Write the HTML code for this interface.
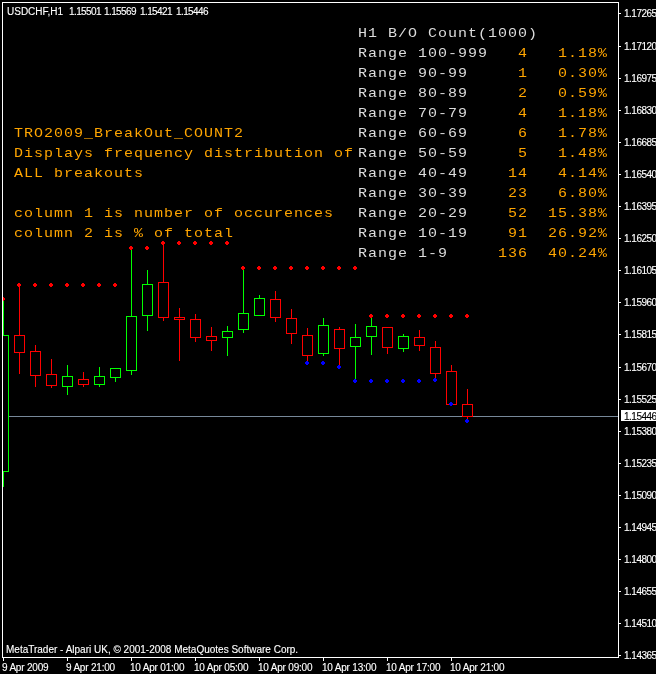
<!DOCTYPE html><html><head><meta charset="utf-8"><style>
html,body{margin:0;padding:0;background:#000;width:656px;height:674px;overflow:hidden;position:relative}
.pl{position:absolute;left:624px;letter-spacing:-0.5px;font:10px "Liberation Sans",sans-serif;color:#fff;line-height:14px;white-space:pre}
.cur{color:#000}
.tl{position:absolute;top:661px;letter-spacing:-0.2px;font:10px "Liberation Sans",sans-serif;color:#fff;line-height:14px;white-space:pre}
.hdr{position:absolute;left:7px;top:5px;letter-spacing:-0.6px;font:10px "Liberation Sans",sans-serif;color:#fff;line-height:14px;white-space:pre}
.ftr{position:absolute;left:6px;top:643px;font:10px "Liberation Sans",sans-serif;color:#fff;line-height:14px;white-space:pre}
.mono{position:absolute;font:15px "Liberation Mono",monospace;letter-spacing:1px;line-height:22px;white-space:pre;transform:scaleY(0.9091) translateZ(0);transform-origin:0 0}
div.pl,div.tl,div.hdr,div.ftr{will-change:transform;-webkit-text-stroke:0.12px currentColor}
.w{color:#dcdcdc}.o{color:#ffa500}
</style></head><body>
<svg width="656" height="674" shape-rendering="crispEdges" style="position:absolute;left:0;top:0"><rect x="3" y="416" width="615" height="1" fill="#778899"/><rect x="3" y="301" width="1" height="186" fill="#00ff00"/><rect x="-2" y="335" width="11" height="137" fill="#00ff00"/><rect x="-1" y="336" width="9" height="135" fill="#000000"/><rect x="19" y="287" width="1" height="87" fill="#ff0000"/><rect x="14" y="335" width="11" height="18" fill="#ff0000"/><rect x="15" y="336" width="9" height="16" fill="#000000"/><rect x="35" y="345" width="1" height="42" fill="#ff0000"/><rect x="30" y="351" width="11" height="25" fill="#ff0000"/><rect x="31" y="352" width="9" height="23" fill="#000000"/><rect x="51" y="359" width="1" height="29" fill="#ff0000"/><rect x="46" y="374" width="11" height="12" fill="#ff0000"/><rect x="47" y="375" width="9" height="10" fill="#000000"/><rect x="67" y="365" width="1" height="30" fill="#00ff00"/><rect x="62" y="376" width="11" height="11" fill="#00ff00"/><rect x="63" y="377" width="9" height="9" fill="#000000"/><rect x="83" y="372" width="1" height="15" fill="#ff0000"/><rect x="78" y="379" width="11" height="6" fill="#ff0000"/><rect x="79" y="380" width="9" height="4" fill="#000000"/><rect x="99" y="367" width="1" height="20" fill="#00ff00"/><rect x="94" y="376" width="11" height="9" fill="#00ff00"/><rect x="95" y="377" width="9" height="7" fill="#000000"/><rect x="115" y="368" width="1" height="14" fill="#00ff00"/><rect x="110" y="368" width="11" height="10" fill="#00ff00"/><rect x="111" y="369" width="9" height="8" fill="#000000"/><rect x="131" y="250" width="1" height="125" fill="#00ff00"/><rect x="126" y="316" width="11" height="55" fill="#00ff00"/><rect x="127" y="317" width="9" height="53" fill="#000000"/><rect x="147" y="270" width="1" height="61" fill="#00ff00"/><rect x="142" y="284" width="11" height="32" fill="#00ff00"/><rect x="143" y="285" width="9" height="30" fill="#000000"/><rect x="163" y="245" width="1" height="76" fill="#ff0000"/><rect x="158" y="282" width="11" height="36" fill="#ff0000"/><rect x="159" y="283" width="9" height="34" fill="#000000"/><rect x="179" y="308" width="1" height="53" fill="#ff0000"/><rect x="174" y="317" width="11" height="3" fill="#ff0000"/><rect x="175" y="318" width="9" height="1" fill="#000000"/><rect x="195" y="314" width="1" height="28" fill="#ff0000"/><rect x="190" y="319" width="11" height="19" fill="#ff0000"/><rect x="191" y="320" width="9" height="17" fill="#000000"/><rect x="211" y="327" width="1" height="24" fill="#ff0000"/><rect x="206" y="336" width="11" height="5" fill="#ff0000"/><rect x="207" y="337" width="9" height="3" fill="#000000"/><rect x="227" y="326" width="1" height="30" fill="#00ff00"/><rect x="222" y="331" width="11" height="7" fill="#00ff00"/><rect x="223" y="332" width="9" height="5" fill="#000000"/><rect x="243" y="270" width="1" height="63" fill="#00ff00"/><rect x="238" y="313" width="11" height="17" fill="#00ff00"/><rect x="239" y="314" width="9" height="15" fill="#000000"/><rect x="259" y="295" width="1" height="21" fill="#00ff00"/><rect x="254" y="298" width="11" height="18" fill="#00ff00"/><rect x="255" y="299" width="9" height="16" fill="#000000"/><rect x="275" y="291" width="1" height="31" fill="#ff0000"/><rect x="270" y="299" width="11" height="19" fill="#ff0000"/><rect x="271" y="300" width="9" height="17" fill="#000000"/><rect x="291" y="309" width="1" height="35" fill="#ff0000"/><rect x="286" y="318" width="11" height="16" fill="#ff0000"/><rect x="287" y="319" width="9" height="14" fill="#000000"/><rect x="307" y="328" width="1" height="35" fill="#ff0000"/><rect x="302" y="335" width="11" height="21" fill="#ff0000"/><rect x="303" y="336" width="9" height="19" fill="#000000"/><rect x="323" y="318" width="1" height="38" fill="#00ff00"/><rect x="318" y="325" width="11" height="29" fill="#00ff00"/><rect x="319" y="326" width="9" height="27" fill="#000000"/><rect x="339" y="327" width="1" height="40" fill="#ff0000"/><rect x="334" y="329" width="11" height="20" fill="#ff0000"/><rect x="335" y="330" width="9" height="18" fill="#000000"/><rect x="355" y="324" width="1" height="57" fill="#00ff00"/><rect x="350" y="337" width="11" height="10" fill="#00ff00"/><rect x="351" y="338" width="9" height="8" fill="#000000"/><rect x="371" y="318" width="1" height="37" fill="#00ff00"/><rect x="366" y="326" width="11" height="11" fill="#00ff00"/><rect x="367" y="327" width="9" height="9" fill="#000000"/><rect x="387" y="327" width="1" height="27" fill="#ff0000"/><rect x="382" y="327" width="11" height="21" fill="#ff0000"/><rect x="383" y="328" width="9" height="19" fill="#000000"/><rect x="403" y="334" width="1" height="18" fill="#00ff00"/><rect x="398" y="336" width="11" height="13" fill="#00ff00"/><rect x="399" y="337" width="9" height="11" fill="#000000"/><rect x="419" y="330" width="1" height="21" fill="#ff0000"/><rect x="414" y="337" width="11" height="9" fill="#ff0000"/><rect x="415" y="338" width="9" height="7" fill="#000000"/><rect x="435" y="341" width="1" height="39" fill="#ff0000"/><rect x="430" y="347" width="11" height="27" fill="#ff0000"/><rect x="431" y="348" width="9" height="25" fill="#000000"/><rect x="451" y="365" width="1" height="40" fill="#ff0000"/><rect x="446" y="371" width="11" height="34" fill="#ff0000"/><rect x="447" y="372" width="9" height="32" fill="#000000"/><rect x="467" y="389" width="1" height="32" fill="#ff0000"/><rect x="462" y="404" width="11" height="13" fill="#ff0000"/><rect x="463" y="405" width="9" height="11" fill="#000000"/><rect x="2" y="297" width="2" height="1" fill="#ff0000"/><rect x="1" y="298" width="4" height="2" fill="#ff0000"/><rect x="2" y="300" width="2" height="1" fill="#ff0000"/><rect x="18" y="283" width="2" height="1" fill="#ff0000"/><rect x="17" y="284" width="4" height="2" fill="#ff0000"/><rect x="18" y="286" width="2" height="1" fill="#ff0000"/><rect x="34" y="283" width="2" height="1" fill="#ff0000"/><rect x="33" y="284" width="4" height="2" fill="#ff0000"/><rect x="34" y="286" width="2" height="1" fill="#ff0000"/><rect x="50" y="283" width="2" height="1" fill="#ff0000"/><rect x="49" y="284" width="4" height="2" fill="#ff0000"/><rect x="50" y="286" width="2" height="1" fill="#ff0000"/><rect x="66" y="283" width="2" height="1" fill="#ff0000"/><rect x="65" y="284" width="4" height="2" fill="#ff0000"/><rect x="66" y="286" width="2" height="1" fill="#ff0000"/><rect x="82" y="283" width="2" height="1" fill="#ff0000"/><rect x="81" y="284" width="4" height="2" fill="#ff0000"/><rect x="82" y="286" width="2" height="1" fill="#ff0000"/><rect x="98" y="283" width="2" height="1" fill="#ff0000"/><rect x="97" y="284" width="4" height="2" fill="#ff0000"/><rect x="98" y="286" width="2" height="1" fill="#ff0000"/><rect x="114" y="283" width="2" height="1" fill="#ff0000"/><rect x="113" y="284" width="4" height="2" fill="#ff0000"/><rect x="114" y="286" width="2" height="1" fill="#ff0000"/><rect x="130" y="246" width="2" height="1" fill="#ff0000"/><rect x="129" y="247" width="4" height="2" fill="#ff0000"/><rect x="130" y="249" width="2" height="1" fill="#ff0000"/><rect x="146" y="246" width="2" height="1" fill="#ff0000"/><rect x="145" y="247" width="4" height="2" fill="#ff0000"/><rect x="146" y="249" width="2" height="1" fill="#ff0000"/><rect x="162" y="241" width="2" height="1" fill="#ff0000"/><rect x="161" y="242" width="4" height="2" fill="#ff0000"/><rect x="162" y="244" width="2" height="1" fill="#ff0000"/><rect x="178" y="241" width="2" height="1" fill="#ff0000"/><rect x="177" y="242" width="4" height="2" fill="#ff0000"/><rect x="178" y="244" width="2" height="1" fill="#ff0000"/><rect x="194" y="241" width="2" height="1" fill="#ff0000"/><rect x="193" y="242" width="4" height="2" fill="#ff0000"/><rect x="194" y="244" width="2" height="1" fill="#ff0000"/><rect x="210" y="241" width="2" height="1" fill="#ff0000"/><rect x="209" y="242" width="4" height="2" fill="#ff0000"/><rect x="210" y="244" width="2" height="1" fill="#ff0000"/><rect x="226" y="241" width="2" height="1" fill="#ff0000"/><rect x="225" y="242" width="4" height="2" fill="#ff0000"/><rect x="226" y="244" width="2" height="1" fill="#ff0000"/><rect x="242" y="266" width="2" height="1" fill="#ff0000"/><rect x="241" y="267" width="4" height="2" fill="#ff0000"/><rect x="242" y="269" width="2" height="1" fill="#ff0000"/><rect x="258" y="266" width="2" height="1" fill="#ff0000"/><rect x="257" y="267" width="4" height="2" fill="#ff0000"/><rect x="258" y="269" width="2" height="1" fill="#ff0000"/><rect x="274" y="266" width="2" height="1" fill="#ff0000"/><rect x="273" y="267" width="4" height="2" fill="#ff0000"/><rect x="274" y="269" width="2" height="1" fill="#ff0000"/><rect x="290" y="266" width="2" height="1" fill="#ff0000"/><rect x="289" y="267" width="4" height="2" fill="#ff0000"/><rect x="290" y="269" width="2" height="1" fill="#ff0000"/><rect x="306" y="266" width="2" height="1" fill="#ff0000"/><rect x="305" y="267" width="4" height="2" fill="#ff0000"/><rect x="306" y="269" width="2" height="1" fill="#ff0000"/><rect x="322" y="266" width="2" height="1" fill="#ff0000"/><rect x="321" y="267" width="4" height="2" fill="#ff0000"/><rect x="322" y="269" width="2" height="1" fill="#ff0000"/><rect x="338" y="266" width="2" height="1" fill="#ff0000"/><rect x="337" y="267" width="4" height="2" fill="#ff0000"/><rect x="338" y="269" width="2" height="1" fill="#ff0000"/><rect x="354" y="266" width="2" height="1" fill="#ff0000"/><rect x="353" y="267" width="4" height="2" fill="#ff0000"/><rect x="354" y="269" width="2" height="1" fill="#ff0000"/><rect x="370" y="314" width="2" height="1" fill="#ff0000"/><rect x="369" y="315" width="4" height="2" fill="#ff0000"/><rect x="370" y="317" width="2" height="1" fill="#ff0000"/><rect x="386" y="314" width="2" height="1" fill="#ff0000"/><rect x="385" y="315" width="4" height="2" fill="#ff0000"/><rect x="386" y="317" width="2" height="1" fill="#ff0000"/><rect x="402" y="314" width="2" height="1" fill="#ff0000"/><rect x="401" y="315" width="4" height="2" fill="#ff0000"/><rect x="402" y="317" width="2" height="1" fill="#ff0000"/><rect x="418" y="314" width="2" height="1" fill="#ff0000"/><rect x="417" y="315" width="4" height="2" fill="#ff0000"/><rect x="418" y="317" width="2" height="1" fill="#ff0000"/><rect x="434" y="314" width="2" height="1" fill="#ff0000"/><rect x="433" y="315" width="4" height="2" fill="#ff0000"/><rect x="434" y="317" width="2" height="1" fill="#ff0000"/><rect x="450" y="314" width="2" height="1" fill="#ff0000"/><rect x="449" y="315" width="4" height="2" fill="#ff0000"/><rect x="450" y="317" width="2" height="1" fill="#ff0000"/><rect x="466" y="314" width="2" height="1" fill="#ff0000"/><rect x="465" y="315" width="4" height="2" fill="#ff0000"/><rect x="466" y="317" width="2" height="1" fill="#ff0000"/><rect x="306" y="361" width="2" height="1" fill="#0000ff"/><rect x="305" y="362" width="4" height="2" fill="#0000ff"/><rect x="306" y="364" width="2" height="1" fill="#0000ff"/><rect x="322" y="361" width="2" height="1" fill="#0000ff"/><rect x="321" y="362" width="4" height="2" fill="#0000ff"/><rect x="322" y="364" width="2" height="1" fill="#0000ff"/><rect x="338" y="365" width="2" height="1" fill="#0000ff"/><rect x="337" y="366" width="4" height="2" fill="#0000ff"/><rect x="338" y="368" width="2" height="1" fill="#0000ff"/><rect x="354" y="379" width="2" height="1" fill="#0000ff"/><rect x="353" y="380" width="4" height="2" fill="#0000ff"/><rect x="354" y="382" width="2" height="1" fill="#0000ff"/><rect x="370" y="379" width="2" height="1" fill="#0000ff"/><rect x="369" y="380" width="4" height="2" fill="#0000ff"/><rect x="370" y="382" width="2" height="1" fill="#0000ff"/><rect x="386" y="379" width="2" height="1" fill="#0000ff"/><rect x="385" y="380" width="4" height="2" fill="#0000ff"/><rect x="386" y="382" width="2" height="1" fill="#0000ff"/><rect x="402" y="379" width="2" height="1" fill="#0000ff"/><rect x="401" y="380" width="4" height="2" fill="#0000ff"/><rect x="402" y="382" width="2" height="1" fill="#0000ff"/><rect x="418" y="379" width="2" height="1" fill="#0000ff"/><rect x="417" y="380" width="4" height="2" fill="#0000ff"/><rect x="418" y="382" width="2" height="1" fill="#0000ff"/><rect x="434" y="378" width="2" height="1" fill="#0000ff"/><rect x="433" y="379" width="4" height="2" fill="#0000ff"/><rect x="434" y="381" width="2" height="1" fill="#0000ff"/><rect x="450" y="402" width="2" height="1" fill="#0000ff"/><rect x="449" y="403" width="4" height="2" fill="#0000ff"/><rect x="450" y="405" width="2" height="1" fill="#0000ff"/><rect x="466" y="419" width="2" height="1" fill="#0000ff"/><rect x="465" y="420" width="4" height="2" fill="#0000ff"/><rect x="466" y="422" width="2" height="1" fill="#0000ff"/><rect x="0" y="0" width="2" height="674" fill="#000000"/><rect x="2" y="2" width="617" height="1" fill="#ffffff"/><rect x="2" y="2" width="1" height="656" fill="#ffffff"/><rect x="618" y="2" width="1" height="656" fill="#ffffff"/><rect x="2" y="657" width="617" height="1" fill="#ffffff"/><rect x="619" y="13" width="2" height="1" fill="#ffffff"/><rect x="619" y="46" width="2" height="1" fill="#ffffff"/><rect x="619" y="78" width="2" height="1" fill="#ffffff"/><rect x="619" y="110" width="2" height="1" fill="#ffffff"/><rect x="619" y="142" width="2" height="1" fill="#ffffff"/><rect x="619" y="174" width="2" height="1" fill="#ffffff"/><rect x="619" y="206" width="2" height="1" fill="#ffffff"/><rect x="619" y="238" width="2" height="1" fill="#ffffff"/><rect x="619" y="270" width="2" height="1" fill="#ffffff"/><rect x="619" y="302" width="2" height="1" fill="#ffffff"/><rect x="619" y="334" width="2" height="1" fill="#ffffff"/><rect x="619" y="367" width="2" height="1" fill="#ffffff"/><rect x="619" y="399" width="2" height="1" fill="#ffffff"/><rect x="619" y="431" width="2" height="1" fill="#ffffff"/><rect x="619" y="463" width="2" height="1" fill="#ffffff"/><rect x="619" y="495" width="2" height="1" fill="#ffffff"/><rect x="619" y="527" width="2" height="1" fill="#ffffff"/><rect x="619" y="559" width="2" height="1" fill="#ffffff"/><rect x="619" y="591" width="2" height="1" fill="#ffffff"/><rect x="619" y="623" width="2" height="1" fill="#ffffff"/><rect x="619" y="655" width="2" height="1" fill="#ffffff"/><rect x="621" y="410" width="35" height="11" fill="#ffffff"/><rect x="3" y="658" width="1" height="3" fill="#ffffff"/><rect x="67" y="658" width="1" height="3" fill="#ffffff"/><rect x="131" y="658" width="1" height="3" fill="#ffffff"/><rect x="195" y="658" width="1" height="3" fill="#ffffff"/><rect x="259" y="658" width="1" height="3" fill="#ffffff"/><rect x="323" y="658" width="1" height="3" fill="#ffffff"/><rect x="387" y="658" width="1" height="3" fill="#ffffff"/><rect x="451" y="658" width="1" height="3" fill="#ffffff"/></svg>
<div class="hdr" style="letter-spacing:0">USDCHF,H1</div><div class="hdr" style="left:69px">1.15501</div><div class="hdr" style="left:104px">1.15569</div><div class="hdr" style="left:140px">1.15421</div><div class="hdr" style="left:176px">1.15446</div>
<div class="ftr">MetaTrader - Alpari UK, © 2001-2008 MetaQuotes Software Corp.</div>
<div class="mono o" style="left:14px;top:124px">TRO2009_BreakOut_COUNT2
Displays frequency distribution of
ALL breakouts

column 1 is number of occurences
column 2 is % of total</div>
<div class="mono" style="left:358px;top:24px"><span class="w">H1 B/O Count(1000)</span>
<span class="w">Range 100-999   </span><span class="o">4   1.18%</span>
<span class="w">Range 90-99     </span><span class="o">1   0.30%</span>
<span class="w">Range 80-89     </span><span class="o">2   0.59%</span>
<span class="w">Range 70-79     </span><span class="o">4   1.18%</span>
<span class="w">Range 60-69     </span><span class="o">6   1.78%</span>
<span class="w">Range 50-59     </span><span class="o">5   1.48%</span>
<span class="w">Range 40-49    </span><span class="o">14   4.14%</span>
<span class="w">Range 30-39    </span><span class="o">23   6.80%</span>
<span class="w">Range 20-29    </span><span class="o">52  15.38%</span>
<span class="w">Range 10-19    </span><span class="o">91  26.92%</span>
<span class="w">Range 1-9     </span><span class="o">136  40.24%</span></div>
<div class="pl" style="top:7px">1.17265</div><div class="pl" style="top:40px">1.17120</div><div class="pl" style="top:72px">1.16975</div><div class="pl" style="top:104px">1.16830</div><div class="pl" style="top:136px">1.16685</div><div class="pl" style="top:168px">1.16540</div><div class="pl" style="top:200px">1.16395</div><div class="pl" style="top:232px">1.16250</div><div class="pl" style="top:264px">1.16105</div><div class="pl" style="top:296px">1.15960</div><div class="pl" style="top:328px">1.15815</div><div class="pl" style="top:361px">1.15670</div><div class="pl" style="top:393px">1.15525</div><div class="pl" style="top:425px">1.15380</div><div class="pl" style="top:457px">1.15235</div><div class="pl" style="top:489px">1.15090</div><div class="pl" style="top:521px">1.14945</div><div class="pl" style="top:553px">1.14800</div><div class="pl" style="top:585px">1.14655</div><div class="pl" style="top:617px">1.14510</div><div class="pl" style="top:649px">1.14365</div><div class="pl cur" style="top:410px">1.15446</div><div class="tl" style="left:2px">9 Apr 2009</div><div class="tl" style="left:66px">9 Apr 21:00</div><div class="tl" style="left:130px">10 Apr 01:00</div><div class="tl" style="left:194px">10 Apr 05:00</div><div class="tl" style="left:258px">10 Apr 09:00</div><div class="tl" style="left:322px">10 Apr 13:00</div><div class="tl" style="left:386px">10 Apr 17:00</div><div class="tl" style="left:450px">10 Apr 21:00</div>
</body></html>
